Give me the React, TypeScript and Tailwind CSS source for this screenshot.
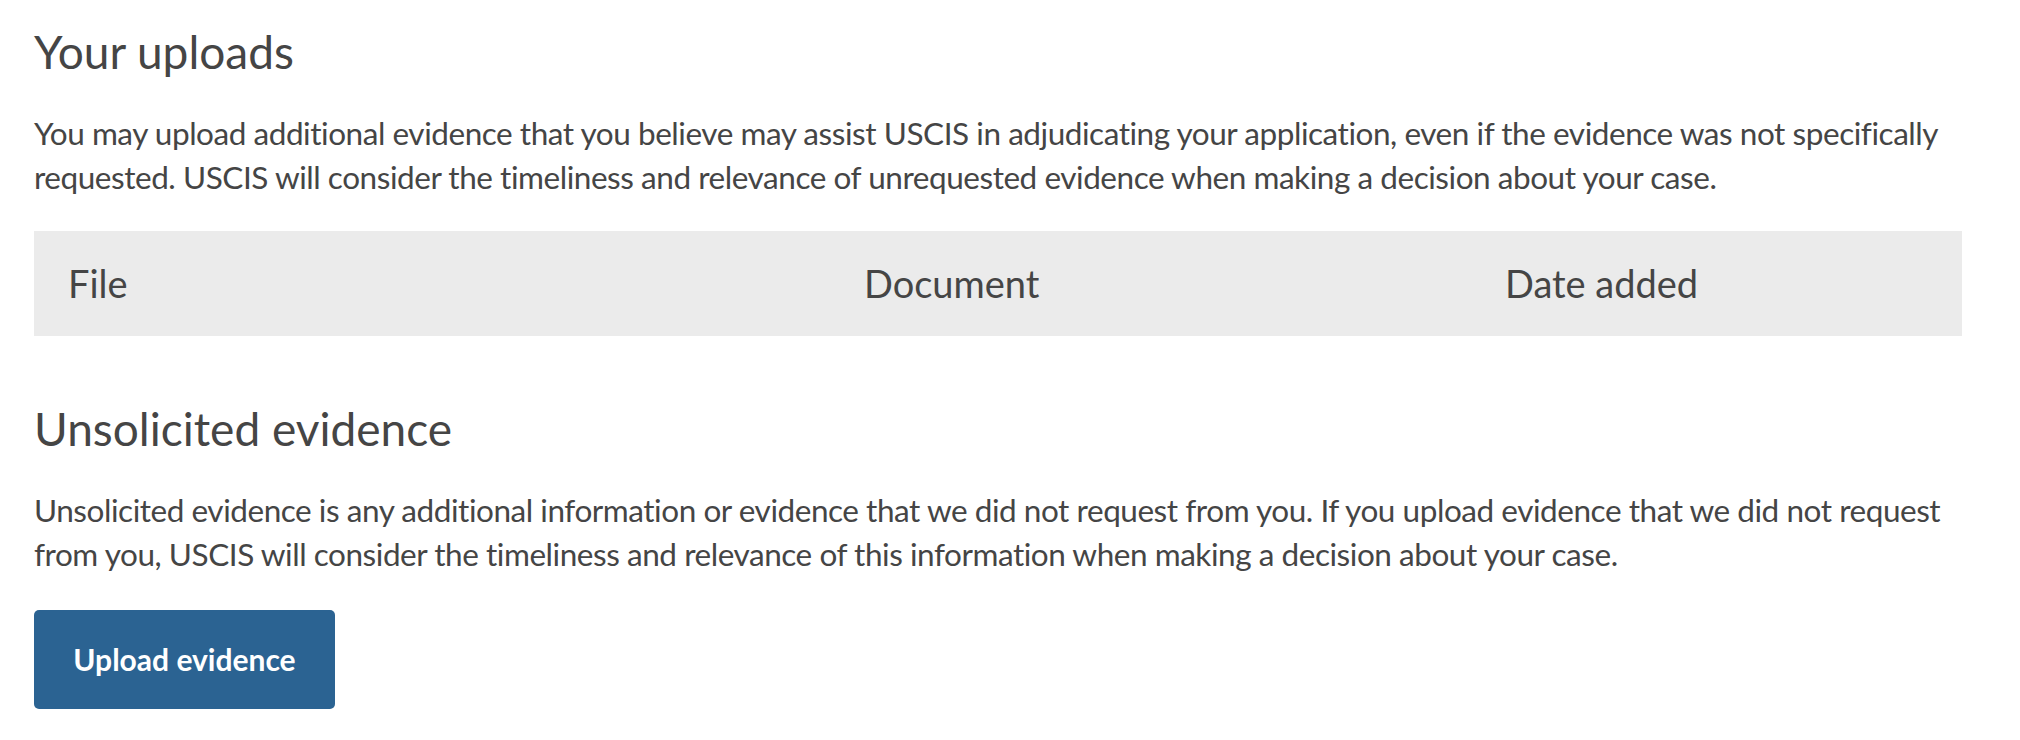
const headers = ["File", "Document", "Date added"];

export default function App() {
  return (
    <div className="h-[740px] w-full bg-white px-[34px] pt-[24px] font-['Lato',sans-serif] text-[#454545]">
      <div className="w-[1928px]">
        <h2 className="text-[46px] leading-[1.2] font-normal">Your uploads</h2>
        <p className="mt-[32px] text-[31.5px] leading-[44px] tracking-[-0.45px]">
          You may upload additional evidence that you believe may assist USCIS in adjudicating your
          application, even if the evidence was not specifically requested. USCIS will consider the
          timeliness and relevance of unrequested evidence when making a decision about your case.
        </p>

        <div className="mt-[32px] grid h-[105px] grid-cols-[796px_641px_1fr] items-center bg-[#ebebeb] text-[38px] leading-[1.2]">
          {headers.map((h) => (
            <div key={h} className="pl-[34px]">
              {h}
            </div>
          ))}
        </div>

        <h2 className="mt-[65px] text-[46px] leading-[1.2] font-normal">Unsolicited evidence</h2>
        <p className="mt-[32px] text-[31.5px] leading-[44px] tracking-[-0.45px]">
          Unsolicited evidence is any additional information or evidence that we did not request from
          you. If you upload evidence that we did not request from you, USCIS will consider the
          timeliness and relevance of this information when making a decision about your case.
        </p>

        <button
          type="button"
          className="mt-[34px] flex h-[99px] w-[301px] items-center justify-center rounded-[5px] bg-[#2b6392] text-[30px] font-bold text-white"
        >
          Upload evidence
        </button>
      </div>
    </div>
  );
}
